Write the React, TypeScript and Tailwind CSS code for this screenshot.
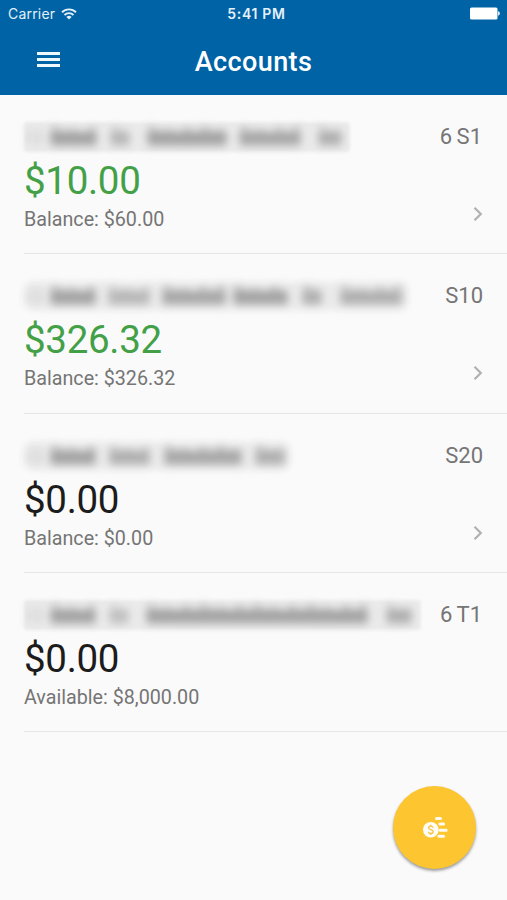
interface Word {
    x: number;
    w: number;
    tone: number;
}

interface Account {
    code: string;
    codeInset: string;
    words: Word[];
    nameWidth: number;
    boxed: boolean;
    amount: string;
    positive: boolean;
    detail: string;
    hasLink: boolean;
}

const accounts: Account[] = [
    {
        code: '6 S1',
        codeInset: 'pr-[25px]',
        words: [
            { x: 5, w: 3, tone: 0.4 },
            { x: 15, w: 3, tone: 0.5 },
            { x: 28, w: 47, tone: 0.85 },
            { x: 88, w: 20, tone: 0.6 },
            { x: 125, w: 80, tone: 0.85 },
            { x: 217, w: 62, tone: 0.8 },
            { x: 296, w: 24, tone: 0.7 },
        ],
        nameWidth: 329,
        boxed: true,
        amount: '$10.00',
        positive: true,
        detail: 'Balance: $60.00',
        hasLink: true,
    },
    {
        code: 'S10',
        codeInset: 'pr-[24px]',
        words: [
            { x: 5, w: 3, tone: 0.4 },
            { x: 15, w: 3, tone: 0.5 },
            { x: 28, w: 46, tone: 0.85 },
            { x: 86, w: 42, tone: 0.6 },
            { x: 140, w: 64, tone: 0.8 },
            { x: 211, w: 55, tone: 0.85 },
            { x: 280, w: 20, tone: 0.7 },
            { x: 318, w: 62, tone: 0.7 },
        ],
        nameWidth: 388,
        boxed: false,
        amount: '$326.32',
        positive: true,
        detail: 'Balance: $326.32',
        hasLink: true,
    },
    {
        code: 'S20',
        codeInset: 'pr-[24px]',
        words: [
            { x: 5, w: 3, tone: 0.4 },
            { x: 15, w: 3, tone: 0.5 },
            { x: 28, w: 46, tone: 0.85 },
            { x: 87, w: 41, tone: 0.7 },
            { x: 142, w: 78, tone: 0.8 },
            { x: 233, w: 30, tone: 0.7 },
        ],
        nameWidth: 270,
        boxed: false,
        amount: '$0.00',
        positive: false,
        detail: 'Balance: $0.00',
        hasLink: true,
    },
    {
        code: '6 T1',
        codeInset: 'pr-[25px]',
        words: [
            { x: 5, w: 3, tone: 0.4 },
            { x: 15, w: 3, tone: 0.5 },
            { x: 28, w: 46, tone: 0.85 },
            { x: 87, w: 20, tone: 0.5 },
            { x: 124, w: 222, tone: 0.85 },
            { x: 364, w: 26, tone: 0.7 },
        ],
        nameWidth: 400,
        boxed: true,
        amount: '$0.00',
        positive: false,
        detail: 'Available: $8,000.00',
        hasLink: false,
    },
];

// Uneven stroke tops, so that a smudge keeps the rhythm of a word
const strokeTops = [7, 11, 10, 13, 8, 12];

function Smudge({ word }: { word: Word }) {
    const count = Math.max(1, Math.round(word.w / 9));
    const step = word.w / count;
    return (
        <g fill="#6a6a6a" opacity={word.tone}>
            <rect x={word.x} y="13" width={word.w} height="12" rx="5" opacity="0.5" />
            {Array.from({ length: count }, (_, i) => {
                const top = strokeTops[i % strokeTops.length];
                return (
                    <rect
                        key={i}
                        x={word.x + i * step + step * 0.1}
                        y={top}
                        width={step * 0.8}
                        height={28 - top}
                        rx="2"
                        opacity="0.4"
                    />
                );
            })}
        </g>
    );
}

// Account names are masked: soft smudges instead of readable text
function MaskedName({ words, width, boxed }: { words: Word[]; width: number; boxed: boolean }) {
    return (
        <svg width={width} height="34" viewBox={`0 0 ${width} 34`} className="block shrink-0 overflow-visible">
            <defs>
                <filter id="soft" filterUnits="userSpaceOnUse" x="-20" y="-20" width="460" height="74">
                    <feGaussianBlur stdDeviation="4.2" />
                </filter>
                <filter id="edge" filterUnits="userSpaceOnUse" x="-20" y="-20" width="460" height="74">
                    <feGaussianBlur stdDeviation="1.6" />
                </filter>
                <filter id="wide" filterUnits="userSpaceOnUse" x="-20" y="-20" width="460" height="74">
                    <feGaussianBlur stdDeviation="3" />
                </filter>
            </defs>
            <rect
                x={boxed ? 2 : 3}
                y={boxed ? 3 : 4}
                width={boxed ? width - 3 : width - 5}
                height={boxed ? 30 : 28}
                rx={boxed ? 4 : 8}
                fill="#ebebeb"
                filter={boxed ? 'url(#edge)' : 'url(#wide)'}
            />
            <g filter="url(#soft)">
                {words.map((word) => (
                    <Smudge key={word.x} word={word} />
                ))}
            </g>
        </svg>
    );
}

function StatusBar() {
    return (
        <div className="grid h-[27px] grid-cols-3 items-center pl-2 pr-[7px] font-['Inter',sans-serif] text-[13px] text-[#e4f1fa]">
            <div className="flex items-center gap-[6px]">
                <span className="text-[14px] tracking-[0.2px]">Carrier</span>
                <svg width="16" height="12" viewBox="0 0 16 12" fill="none" stroke="currentColor" strokeWidth="1.9">
                    <path d="M1 4.2a10 10 0 0 1 14 0" />
                    <path d="M3.5 7a6.4 6.4 0 0 1 9 0" />
                    <path d="M8 11.6 5.4 9a3.7 3.7 0 0 1 5.2 0z" fill="currentColor" stroke="none" />
                </svg>
            </div>
            <span className="whitespace-nowrap pl-[5px] text-center text-[14px] font-semibold tracking-[0.7px]">5:41 PM</span>
            <svg width="31" height="13" viewBox="0 0 31 13" fill="white" className="justify-self-end">
                <rect x="1" y="0.5" width="27.5" height="12" rx="1.5" />
                <path d="M29.1 4.3c2.3.6 2.3 3.8 0 4.4z" />
            </svg>
        </div>
    );
}

function AccountRow({ account }: { account: Account }) {
    return (
        <li className="h-[159.3px] pl-6">
            <div className="flex h-full flex-col border-b border-[#e6e6e6] pt-6">
                <div className={`-ml-[2px] flex h-[34px] items-center justify-between ${account.codeInset}`}>
                    <MaskedName words={account.words} width={account.nameWidth} boxed={account.boxed} />
                    <span className="pt-[2px] text-[22px] leading-[34px] [word-spacing:-1px] text-[#757575]">
                        {account.code}
                    </span>
                </div>
                <div
                    className={`h-[50px] text-[38.5px] leading-[55px] tracking-[-0.3px] ${account.positive ? 'text-[#43a047]' : 'text-[#1c1c1c]'}`}
                >
                    {account.amount}
                </div>
                <div className="flex items-start justify-between pr-6">
                    <span className="text-[19.7px] leading-[33px] text-[#757575]">{account.detail}</span>
                    {account.hasLink && (
                        <svg
                            width="10"
                            height="16"
                            viewBox="0 0 10 16"
                            fill="none"
                            stroke="#b0b0b0"
                            strokeWidth="2.2"
                            className="mt-[3px]"
                        >
                            <path d="M1.5 1.8 7.8 8l-6.3 6.2" />
                        </svg>
                    )}
                </div>
            </div>
        </li>
    );
}

function TransferButton() {
    return (
        <button
            aria-label="Transfer"
            className="absolute bottom-[31px] right-[31px] flex size-[83px] items-center justify-center rounded-full bg-[#fdc530] shadow-[0_2px_3px_rgba(0,0,0,0.38)]"
        >
            <svg width="26" height="24" viewBox="0 0 26 24" fill="none">
                <g stroke="#fffbee" strokeWidth="3" strokeLinecap="round">
                    <path d="M14.5 2.4h4M17.8 7.9h3.8M18 14.2h6.2M16.8 20.2h4.8" />
                </g>
                <circle cx="8.8" cy="13.8" r="7.8" fill="#fffdf5" />
                <path
                    d="M11.1 11.6c-.3-1-1.2-1.4-2.3-1.4s-2.2.5-2.2 1.6c0 2.4 4.6 1.4 4.6 3.9 0 1.2-1 1.8-2.4 1.8-1.3 0-2.2-.6-2.4-1.7M8.8 8.8v1.4M8.8 17.5v1.4"
                    stroke="#f8c441"
                    strokeWidth="1.3"
                />
            </svg>
        </button>
    );
}

export default function App() {
    return (
        <div className="relative h-[900px] w-[507px] overflow-hidden bg-[#fafafa] font-['Roboto',sans-serif]">
            <header className="h-[95px] bg-[#0063a5]">
                <StatusBar />
                <div className="grid h-[68px] grid-cols-[1fr_auto_1fr] items-center">
                    <button aria-label="Menu" className="ml-[37px] flex w-[23px] flex-col gap-[3px] pb-[5px]">
                        <span className="h-[3px] bg-[#edf8ff]" />
                        <span className="h-[3px] bg-[#edf8ff]" />
                        <span className="h-[3px] bg-[#edf8ff]" />
                    </button>
                    <h1 className="pt-px text-[27px] font-medium leading-[68px] tracking-[0.4px] text-white">Accounts</h1>
                </div>
            </header>
            <ul>
                {accounts.map((account) => (
                    <AccountRow key={account.code} account={account} />
                ))}
            </ul>
            <TransferButton />
        </div>
    );
}
